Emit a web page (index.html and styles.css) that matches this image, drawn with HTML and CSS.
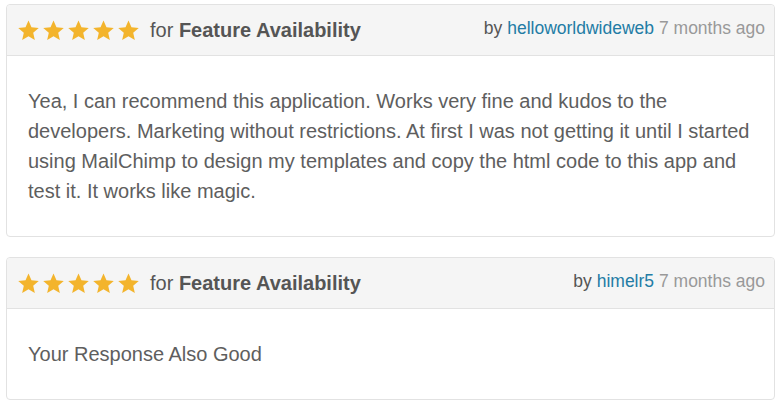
FILE: index.html
```html
<!DOCTYPE html>
<html>
<head>
<meta charset="utf-8">
<link rel="stylesheet" href="styles.css">
</head>
<body>
<div class="reviews">
  <div class="card">
    <div class="card-head">
      <div class="left">
        <span class="stars">
          <svg class="star" viewBox="0 0 24 24"><path d="M12 1.5l3.1 7.1 7.6.7-5.8 5.1 1.7 7.6L12 18l-6.6 4 1.7-7.6L1.3 9.3l7.6-.7z"/></svg>
          <svg class="star" viewBox="0 0 24 24"><path d="M12 1.5l3.1 7.1 7.6.7-5.8 5.1 1.7 7.6L12 18l-6.6 4 1.7-7.6L1.3 9.3l7.6-.7z"/></svg>
          <svg class="star" viewBox="0 0 24 24"><path d="M12 1.5l3.1 7.1 7.6.7-5.8 5.1 1.7 7.6L12 18l-6.6 4 1.7-7.6L1.3 9.3l7.6-.7z"/></svg>
          <svg class="star" viewBox="0 0 24 24"><path d="M12 1.5l3.1 7.1 7.6.7-5.8 5.1 1.7 7.6L12 18l-6.6 4 1.7-7.6L1.3 9.3l7.6-.7z"/></svg>
          <svg class="star" viewBox="0 0 24 24"><path d="M12 1.5l3.1 7.1 7.6.7-5.8 5.1 1.7 7.6L12 18l-6.6 4 1.7-7.6L1.3 9.3l7.6-.7z"/></svg>
        </span>
        <span class="for">for <b>Feature Availability</b></span>
      </div>
      <div class="meta">by <a class="user" href="#">helloworldwideweb</a> <span class="ago">7 months ago</span></div>
    </div>
    <div class="card-body">
      <p>Yea, I can recommend this application. Works very fine and kudos to the developers. Marketing without restrictions. At first I was not getting it until I started using MailChimp to design my templates and copy the html code to this app and test it. It works like magic.</p>
    </div>
  </div>
  <div class="card">
    <div class="card-head">
      <div class="left">
        <span class="stars">
          <svg class="star" viewBox="0 0 24 24"><path d="M12 1.5l3.1 7.1 7.6.7-5.8 5.1 1.7 7.6L12 18l-6.6 4 1.7-7.6L1.3 9.3l7.6-.7z"/></svg>
          <svg class="star" viewBox="0 0 24 24"><path d="M12 1.5l3.1 7.1 7.6.7-5.8 5.1 1.7 7.6L12 18l-6.6 4 1.7-7.6L1.3 9.3l7.6-.7z"/></svg>
          <svg class="star" viewBox="0 0 24 24"><path d="M12 1.5l3.1 7.1 7.6.7-5.8 5.1 1.7 7.6L12 18l-6.6 4 1.7-7.6L1.3 9.3l7.6-.7z"/></svg>
          <svg class="star" viewBox="0 0 24 24"><path d="M12 1.5l3.1 7.1 7.6.7-5.8 5.1 1.7 7.6L12 18l-6.6 4 1.7-7.6L1.3 9.3l7.6-.7z"/></svg>
          <svg class="star" viewBox="0 0 24 24"><path d="M12 1.5l3.1 7.1 7.6.7-5.8 5.1 1.7 7.6L12 18l-6.6 4 1.7-7.6L1.3 9.3l7.6-.7z"/></svg>
        </span>
        <span class="for">for <b>Feature Availability</b></span>
      </div>
      <div class="meta">by <a class="user" href="#">himelr5</a> <span class="ago">7 months ago</span></div>
    </div>
    <div class="card-body">
      <p>Your Response Also Good</p>
    </div>
  </div>
</div>
</body>
</html>
```
FILE: styles.css
```css
html, body {
  margin: 0;
  padding: 0;
  background: #fff;
}
body {
  font-family: "Liberation Sans", Arial, sans-serif;
  color: #555;
}
.reviews {
  padding: 4px 2px 0 6px;
  display: flex;
  flex-direction: column;
  gap: 20px;
}
.card {
  border: 1px solid #e2e2e2;
  border-radius: 4px;
  background: #fff;
}
.card-head {
  background: #f5f5f5;
  border-bottom: 1px solid #e2e2e2;
  border-radius: 4px 4px 0 0;
  height: 50px;
  display: flex;
  align-items: center;
  justify-content: space-between;
  padding: 0 9px 0 10px;
}
.left {
  display: flex;
  align-items: center;
}
.stars {
  display: flex;
  gap: 2px;
  margin-right: 10px;
}
.star {
  width: 23px;
  height: 23px;
  fill: #f3b42c;
  display: block;
}
.for {
  font-size: 20px;
  color: #555;
}
.for b {
  font-weight: bold;
}
.meta {
  font-size: 17.5px;
  color: #555;
  padding-bottom: 3px;
}
.user {
  color: #237ca5;
  text-decoration: none;
}
.ago {
  color: #999;
}
.card-body {
  padding: 30px 21px 30px 21px;
}
.card-body p {
  margin: 0;
  font-size: 20px;
  line-height: 30px;
  color: #5e5e5e;
}
```
